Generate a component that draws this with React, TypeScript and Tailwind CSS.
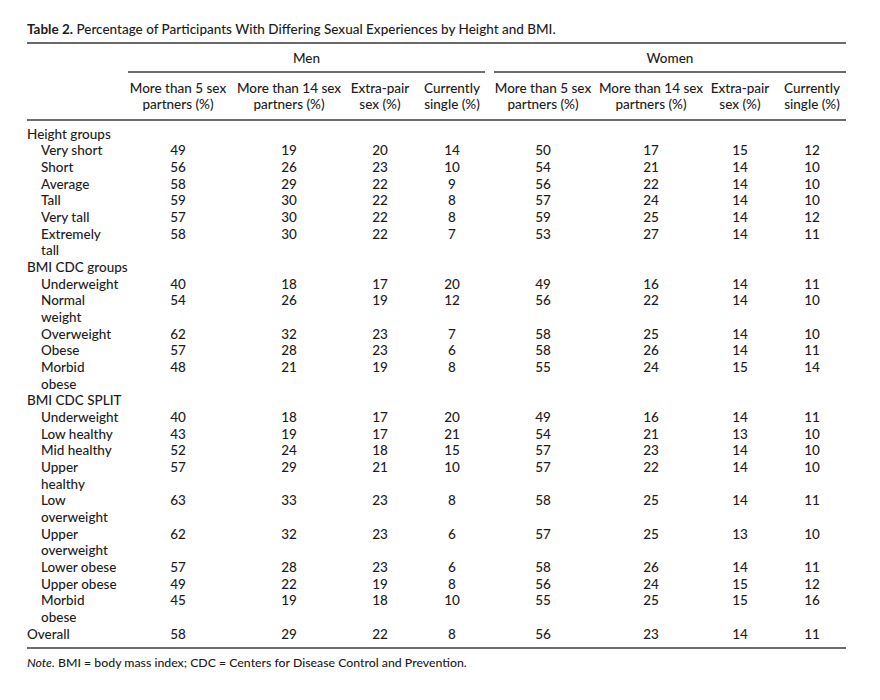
import React from "react";

type Row = { label: string[]; vals?: string[]; head?: boolean; indent?: boolean };

const rows: Row[] = [
  { label: ["Height groups"], head: true },
  { label: ["Very short"], vals: ["49", "19", "20", "14", "50", "17", "15", "12"], indent: true },
  { label: ["Short"], vals: ["56", "26", "23", "10", "54", "21", "14", "10"], indent: true },
  { label: ["Average"], vals: ["58", "29", "22", "9", "56", "22", "14", "10"], indent: true },
  { label: ["Tall"], vals: ["59", "30", "22", "8", "57", "24", "14", "10"], indent: true },
  { label: ["Very tall"], vals: ["57", "30", "22", "8", "59", "25", "14", "12"], indent: true },
  { label: ["Extremely", "tall"], vals: ["58", "30", "22", "7", "53", "27", "14", "11"], indent: true },
  { label: ["BMI CDC groups"], head: true },
  { label: ["Underweight"], vals: ["40", "18", "17", "20", "49", "16", "14", "11"], indent: true },
  { label: ["Normal", "weight"], vals: ["54", "26", "19", "12", "56", "22", "14", "10"], indent: true },
  { label: ["Overweight"], vals: ["62", "32", "23", "7", "58", "25", "14", "10"], indent: true },
  { label: ["Obese"], vals: ["57", "28", "23", "6", "58", "26", "14", "11"], indent: true },
  { label: ["Morbid", "obese"], vals: ["48", "21", "19", "8", "55", "24", "15", "14"], indent: true },
  { label: ["BMI CDC SPLIT"], head: true },
  { label: ["Underweight"], vals: ["40", "18", "17", "20", "49", "16", "14", "11"], indent: true },
  { label: ["Low healthy"], vals: ["43", "19", "17", "21", "54", "21", "13", "10"], indent: true },
  { label: ["Mid healthy"], vals: ["52", "24", "18", "15", "57", "23", "14", "10"], indent: true },
  { label: ["Upper", "healthy"], vals: ["57", "29", "21", "10", "57", "22", "14", "10"], indent: true },
  { label: ["Low", "overweight"], vals: ["63", "33", "23", "8", "58", "25", "14", "11"], indent: true },
  { label: ["Upper", "overweight"], vals: ["62", "32", "23", "6", "57", "25", "13", "10"], indent: true },
  { label: ["Lower obese"], vals: ["57", "28", "23", "6", "58", "26", "14", "11"], indent: true },
  { label: ["Upper obese"], vals: ["49", "22", "19", "8", "56", "24", "15", "12"], indent: true },
  { label: ["Morbid", "obese"], vals: ["45", "19", "18", "10", "55", "25", "15", "16"], indent: true },
  { label: ["Overall"], vals: ["58", "29", "22", "8", "56", "23", "14", "11"] },
];

const grid = "grid grid-cols-[99px_104px_118px_64px_80px_102px_114px_64px_80px]";

const headers = [
  ["More than 5 sex", "partners (%)"],
  ["More than 14 sex", "partners (%)"],
  ["Extra-pair", "sex (%)"],
  ["Currently", "single (%)"],
];

export default function App() {
  return (
    <div
      className="min-h-[700px] w-[880px] bg-white pl-[27px] pt-[21px] font-medium text-[#1e1c1c]"
      style={{ fontFamily: "Lato, 'Open Sans', sans-serif" }}
    >
      <div className="w-[819px]">
        <div className="text-[13.5px] leading-[17px]">
          <span className="font-bold">Table 2.</span> Percentage of Participants With Differing Sexual Experiences by Height and BMI.
        </div>
        <div className="mt-[4px] h-[1.5px] bg-[#6a6a6a]" />
        <div className="text-[13.5px] leading-[16.67px]">
          <div className="flex pt-[6px]">
            <div className="w-[101px]" />
            <div className="w-[357px] text-center">Men</div>
            <div className="w-[9px]" />
            <div className="flex-1 text-center">Women</div>
          </div>
          <div className="mt-[5px] flex">
            <div className="w-[101px]" />
            <div className="h-[1.5px] w-[357px] bg-[#6a6a6a]" />
            <div className="w-[9px]" />
            <div className="h-[1.5px] flex-1 bg-[#6a6a6a]" />
          </div>
          <div className={`${grid} pt-[7px]`}>
            <div />
            {[...headers, ...headers].map((h, i) => (
              <div key={i} className="text-center whitespace-nowrap">
                {h[0]}
                <br />
                {h[1]}
              </div>
            ))}
          </div>
          <div className="mt-[6px] h-[1.5px] bg-[#6a6a6a]" />
          <div className="pt-[5px]">
            {rows.map((r, i) => (
              <div key={i} className={grid}>
                <div className={`${r.indent ? "pl-[14px]" : ""} whitespace-nowrap`}>
                  {r.label.map((l, j) => (
                    <div key={j}>{l}</div>
                  ))}
                </div>
                {r.head
                  ? null
                  : (r.vals || []).map((v, j) => (
                      <div key={j} className="text-center">
                        {v}
                      </div>
                    ))}
              </div>
            ))}
          </div>
          <div className="mt-[5px] h-[1.5px] bg-[#6a6a6a]" />
          <div className="pt-[6px] text-[12.3px] leading-[16px]">
            <span className="italic">Note.</span> BMI = body mass index; CDC = Centers for Disease Control and Prevention.
          </div>
        </div>
      </div>
    </div>
  );
}
